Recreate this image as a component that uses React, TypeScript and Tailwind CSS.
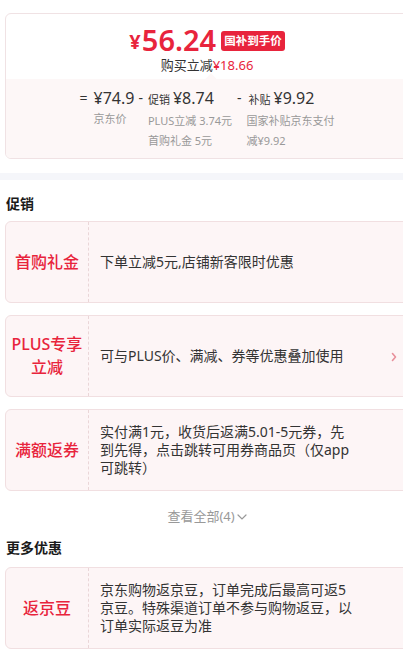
import React from 'react'

const red = 'text-[#e8243c]'

interface PromoCardProps {
  label: React.ReactNode
  children: React.ReactNode
  arrow?: boolean
}

function PromoCard({ label, children, arrow = false }: PromoCardProps) {
  return (
    <div className="flex h-[82px] rounded-[6px] border border-[#f1dfe1] bg-[#fdf5f6]">
      <div className={`flex w-[83px] shrink-0 items-center justify-center border-r border-dashed border-[#ead6d8] text-center text-[16px] font-medium leading-[23px] ${red}`}>
        {label}
      </div>
      <div className="flex flex-1 items-center pl-[11px] text-[14px] leading-[18px] text-[#333]">
        <div className="w-[252px]">{children}</div>
        {arrow && (
          <svg width="6" height="10" viewBox="0 0 6 10" className="ml-auto mr-[11px] mt-[1px]">
            <path d="M1.5 1.5 L4.5 5 L1.5 8.5" fill="none" stroke="#e8909b" strokeWidth="1.6" strokeLinecap="round" strokeLinejoin="round" />
          </svg>
        )}
      </div>
    </div>
  )
}

export default function App() {
  return (
    <div
      className="w-[403px] h-[656px] overflow-hidden bg-white"
      style={{ fontFamily: '"Noto Sans", "Noto Sans CJK SC", sans-serif' }}
    >
      <div className="w-[414px] px-[5px] pt-[13px]">
        {/* price summary */}
        <div className="overflow-hidden rounded-[6px] border border-[#f0e2e4]">
          <div className="pt-[9px] pb-[6px] text-center">
            <div className={`flex h-[33px] items-center justify-center font-semibold ${red}`}>
              <span className="text-[20px] font-bold leading-[20px] mt-[5px] mr-[1px]">¥</span>
              <span className="text-[29px] leading-[29px]">56.24</span>
              <span className="ml-[5px] mt-[2px] rounded-[3px] bg-[#e8243c] px-[3px] text-[11.5px] font-bold leading-[20px] text-white">
                国补到手价
              </span>
            </div>
            <div className="mt-[1px] text-[13px] leading-[16px] text-[#333]">
              购买立减<span className={red}>¥18.66</span>
            </div>
          </div>
          <div className="relative bg-[#fdf7f7] pt-[8px] pb-[8px]">
            <div className="absolute left-[201px] top-[-4px] h-[8px] w-[8px] rotate-45 bg-[#fdf7f7]" />
            <div className="relative flex justify-center text-[#333]">
              <span className="mr-[6px] text-[14px] leading-[22px]">=</span>
              <div>
                <div className="text-[16px] leading-[22px]">¥74.9</div>
                <div className="text-[11px] leading-[20px] text-[#999]">京东价</div>
              </div>
              <span className="ml-[4px] mr-[5px] text-[14px] leading-[22px]">-</span>
              <div>
                <div className="leading-[22px]">
                  <span className="text-[11px]">促销</span>
                  <span className="ml-[3px] text-[16px]">¥8.74</span>
                </div>
                <div className="text-[11px] leading-[20px] text-[#999]">PLUS立减 3.74元</div>
                <div className="text-[11px] leading-[19px] text-[#999]">首购礼金 5元</div>
              </div>
              <span className="ml-[5px] mr-[5px] text-[14px] leading-[22px]">-</span>
              <div>
                <div className="leading-[22px]">
                  <span className="ml-[2px] text-[11px]">补贴</span>
                  <span className="ml-[3px] text-[16px]">¥9.92</span>
                </div>
                <div className="text-[11px] leading-[20px] text-[#999]">国家补贴京东支付</div>
                <div className="text-[11px] leading-[19px] text-[#999]">减¥9.92</div>
              </div>
            </div>
          </div>
        </div>
      </div>

      <div className="mt-[14px] h-[7px] bg-[#f5f6fa]" />

      <div className="w-[414px] px-[5px]">
        <div className="pt-[12px] pb-[5px] pl-[1px] text-[14px] font-bold leading-[24px] text-[#1a1a1a]">促销</div>
        <div className="flex flex-col gap-[12px]">
          <PromoCard label="首购礼金">下单立减5元,店铺新客限时优惠</PromoCard>
          <PromoCard label={<>PLUS专享<br />立减</>} arrow>
            可与PLUS价、满减、券等优惠叠加使用
          </PromoCard>
          <PromoCard label="满额返券">
            实付满1元，收货后返满5.01-5元券，先到先得，点击跳转可用券商品页（仅app可跳转）
          </PromoCard>
        </div>
        <div className="flex items-center justify-center pt-[15px] pb-[10px] text-[13px] leading-[20px] text-[#999]">
          查看全部(4)
          <svg width="10" height="6" viewBox="0 0 10 6" className="ml-[2px] mt-[2px]">
            <path d="M1 1 L5 5 L9 1" fill="none" stroke="#999" strokeWidth="1.2" strokeLinecap="round" />
          </svg>
        </div>
        <div className="pb-[7px] pl-[1px] text-[14px] font-bold leading-[24px] text-[#1a1a1a]">更多优惠</div>
        <PromoCard label="返京豆">
          京东购物返京豆，订单完成后最高可返5京豆。特殊渠道订单不参与购物返豆，以订单实际返豆为准
        </PromoCard>
      </div>
    </div>
  )
}
